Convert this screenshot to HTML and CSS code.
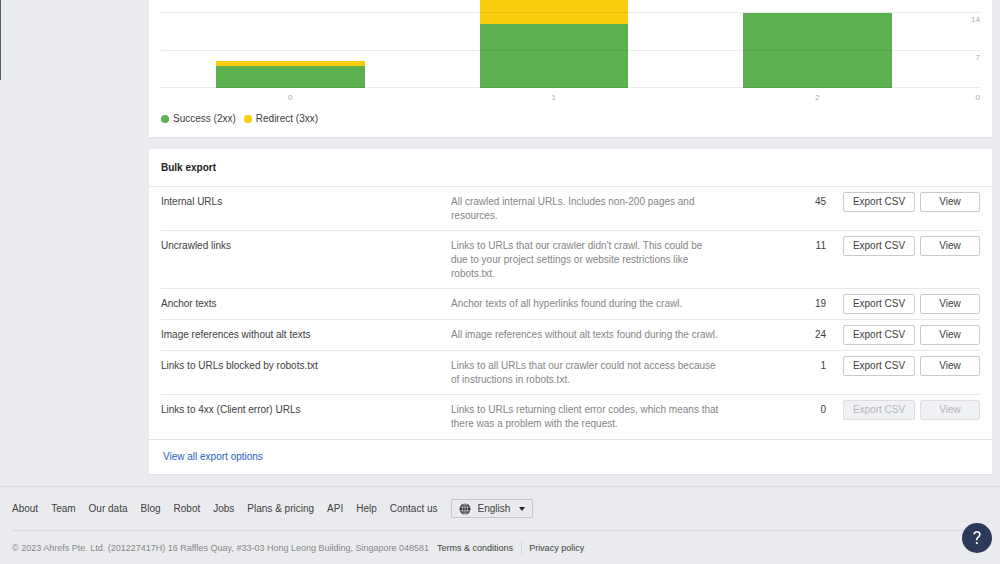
FILE: index.html
```html
<!DOCTYPE html>
<html lang="en">
<head>
<meta charset="utf-8">
<meta name="viewport" content="width=device-width, initial-scale=1">
<title>Bulk export</title>
<link rel="stylesheet" href="styles.css">
</head>
<body>
<div class="layout">
  <aside class="sidebar"></aside>
  <main class="main">
    <section class="card chart-card" aria-label="Depth chart">
      <div class="plot">
        <div class="bars">
          <div class="bar"><span class="seg redirect" style="height:5px"></span><span class="seg success" style="height:22px"></span></div>
          <div class="bar"><span class="seg redirect" style="height:24px"></span><span class="seg success" style="height:64px"></span></div>
          <div class="bar"><span class="seg success" style="height:75px"></span></div>
        </div>
        <div class="grid">
          <span class="tick">14</span>
          <span class="tick">7</span>
          <span class="tick base"></span>
        </div>
      </div>
      <div class="axis">
        <div class="axis-labels"><span>0</span><span>1</span><span>2</span></div>
        <span class="axis-zero">0</span>
      </div>
      <ul class="legend">
        <li><i class="dot success"></i>Success (2xx)</li>
        <li><i class="dot redirect"></i>Redirect (3xx)</li>
      </ul>
    </section>

    <section class="card">
      <h2 class="card-title">Bulk export</h2>
      <div class="table-wrap">
        <table class="exports">
          <colgroup><col class="c-name"><col><col class="c-count"><col class="c-actions"></colgroup>
          <tbody>
          <tr><th scope="row">Internal URLs</th><td class="desc"><p>All crawled internal URLs. Includes non-200 pages and resources.</p></td><td class="count">45</td><td><div class="actions"><button class="btn csv">Export CSV</button><button class="btn view">View</button></div></td></tr>
          <tr><th scope="row">Uncrawled links</th><td class="desc"><p>Links to URLs that our crawler didn't crawl. This could be due to your project settings or website restrictions like robots.txt.</p></td><td class="count">11</td><td><div class="actions"><button class="btn csv">Export CSV</button><button class="btn view">View</button></div></td></tr>
          <tr><th scope="row">Anchor texts</th><td class="desc"><p>Anchor texts of all hyperlinks found during the crawl.</p></td><td class="count">19</td><td><div class="actions"><button class="btn csv">Export CSV</button><button class="btn view">View</button></div></td></tr>
          <tr><th scope="row">Image references without alt texts</th><td class="desc"><p>All image references without alt texts found during the crawl.</p></td><td class="count">24</td><td><div class="actions"><button class="btn csv">Export CSV</button><button class="btn view">View</button></div></td></tr>
          <tr><th scope="row">Links to URLs blocked by robots.txt</th><td class="desc"><p>Links to all URLs that our crawler could not access because of instructions in robots.txt.</p></td><td class="count">1</td><td><div class="actions"><button class="btn csv">Export CSV</button><button class="btn view">View</button></div></td></tr>
          <tr><th scope="row">Links to 4xx (Client error) URLs</th><td class="desc"><p>Links to URLs returning client error codes, which means that there was a problem with the request.</p></td><td class="count">0</td><td><div class="actions"><button class="btn csv" disabled>Export CSV</button><button class="btn view" disabled>View</button></div></td></tr>
          </tbody>
        </table>
      </div>
      <div class="card-foot"><a href="#">View all export options</a></div>
    </section>
  </main>
</div>

<footer class="footer">
  <nav class="footer-nav">
    <a href="#">About</a><a href="#">Team</a><a href="#">Our data</a><a href="#">Blog</a><a href="#">Robot</a><a href="#">Jobs</a><a href="#">Plans &amp; pricing</a><a href="#">API</a><a href="#">Help</a><a href="#">Contact us</a>
    <label class="language">
      <svg class="globe" viewBox="0 0 12 12" aria-hidden="true"><circle cx="6" cy="6" r="5.5" fill="#333"/><g fill="none" stroke="#eaebee" stroke-width=".6"><ellipse cx="6" cy="6" rx="2.5" ry="5.2"/><path d="M.8 4.2h10.4M.8 7.8h10.4M6 .6v10.8"/></g></svg>
      <select aria-label="Language"><option>English</option></select>
      <svg class="caret" viewBox="0 0 6 4" aria-hidden="true"><path d="M0 0h6L3 4z" fill="#222"/></svg>
    </label>
  </nav>
  <div class="legal">
    <span>© 2023 Ahrefs Pte. Ltd. (201227417H) 16 Raffles Quay, #33-03 Hong Leong Building, Singapore 048581</span>
    <a href="#">Terms &amp; conditions</a>
    <a class="divided" href="#">Privacy policy</a>
  </div>
</footer>

<button class="help" aria-label="Help">?</button>
</body>
</html>
```
FILE: styles.css
```css
* { box-sizing: border-box; }

body {
  margin: 0;
  background: #eaebee;
  color: #404040;
  font: 10px/14px "Liberation Sans", Arial, sans-serif;
}

button, select { font: inherit; color: inherit; }
a { color: inherit; text-decoration: none; }

.layout { display: flex; align-items: flex-start; padding-right: 8px; }
.sidebar { flex: 0 0 149px; height: 80px; border-left: 1px solid #566175; }
.main { flex: 1; display: flex; flex-direction: column; gap: 11px; min-width: 0; }

.card { background: #fff; border-bottom: 1px solid #e0e2e5; }

/* Chart */
.chart-card { padding: 0 12px 11px; }
.plot { display: grid; height: 88px; overflow: hidden; }
.bars, .grid { grid-area: 1 / 1; }
.bars { display: flex; justify-content: space-between; align-items: flex-end; padding: 0 88px 0 55px; }
.bar { width: 22%; display: flex; flex-direction: column; }
.success { background: #5cb050; }
.redirect { background: #fbcd0e; }
.grid { display: flex; flex-direction: column; padding-top: 12px; z-index: 1; }
.tick {
  height: 38px;
  border-top: 1px solid rgba(0, 0, 0, .08);
  color: #aaa;
  font-size: 8px;
  line-height: 13px;
  text-align: right;
}
.tick.base { height: 1px; }
.tick + .tick:not(.base) { height: 37px; }
.axis { display: flex; color: #aaa; font-size: 8px; line-height: 10px; padding-top: 5px; }
.axis-labels { flex: 1; display: flex; justify-content: space-between; padding: 0 84px 0 55px; }
.axis-labels span { width: 22%; text-align: center; }
.legend { display: flex; gap: 8px; margin: 0; padding: 9px 0 0; list-style: none; }
.legend li { display: flex; align-items: center; gap: 4px; }
.dot { width: 8px; height: 8px; border-radius: 50%; }

/* Export table */
.card-title { margin: 0; padding: 12px 12px 11px; border-bottom: 1px solid #e6e7ea; color: #222; font-size: 10px; line-height: 14px; }
.table-wrap { padding: 0 12px; }
.exports { width: 100%; table-layout: fixed; border-spacing: 0; }
.c-name { width: 290px; }
.c-count { width: 60px; }
.c-actions { width: 154px; }
.exports th, .exports td { padding: 8px 0 7px; border-bottom: 1px solid #e6e7ea; text-align: left; vertical-align: top; font-weight: 400; }
.exports tr:last-child > * { border-bottom: 0; padding-bottom: 8px; }
.exports td:last-child { padding: 5px 0; }
.exports .desc { color: #858585; }
.desc p { margin: 0; max-width: 269px; }
.exports .count { text-align: right; }
.actions { display: flex; justify-content: flex-end; gap: 5px; }
.btn { height: 20px; padding: 0; border: 1px solid #c9cacd; border-radius: 2px; background: #fff; }
.btn:disabled { background: #f0f1f4; border-color: #dcdee2; color: #b4b6ba; }
.csv { width: 72px; }
.view { width: 60px; }
.card-foot { padding: 10px 14px; border-top: 1px solid #e0e2e5; color: #2563c0; }

/* Footer */
.footer { margin-top: 11px; border-top: 1px solid #d8dade; padding: 0 12px; }
.footer-nav { display: flex; align-items: center; gap: 13px; padding: 12px 0; border-bottom: 1px solid #d8dade; }
.language { display: flex; align-items: center; height: 19px; padding: 0 7px; border: 1px solid #c4c6ca; border-radius: 2px; }
.globe { width: 12px; height: 12px; margin-right: 7px; }
.caret { width: 6px; height: 4px; margin-left: 8px; }
.language select { appearance: none; border: 0; padding: 0; background: none; }
.legal { display: flex; gap: 8px; padding-top: 10px; font-size: 9px; }
.legal span { color: #888; }
.divided { border-left: 1px solid #d4d6da; padding-left: 7px; }
.help {
  position: fixed;
  right: 8px;
  bottom: 11px;
  width: 30px;
  height: 30px;
  padding: 0;
  border: 0;
  border-radius: 50%;
  background: #2b3a59;
  color: #fff;
  font: 400 18px/30px Roboto, sans-serif;
}
```
